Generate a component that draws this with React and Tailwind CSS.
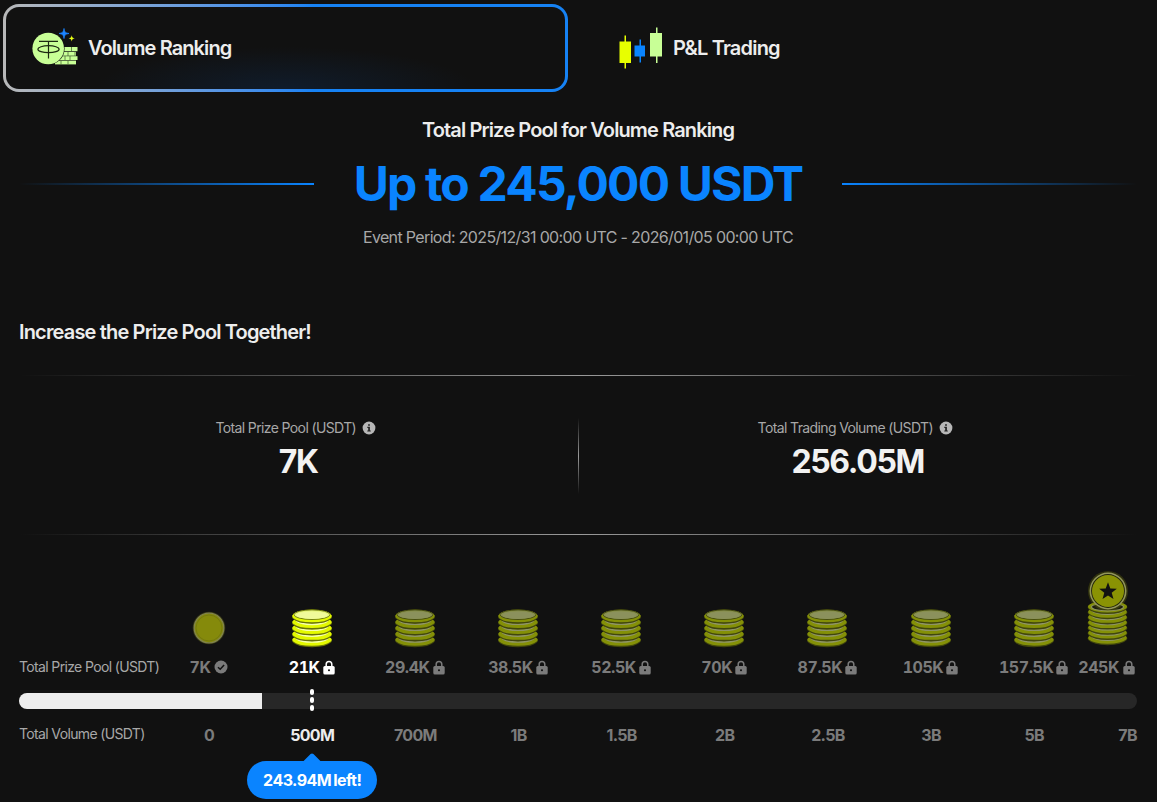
import React from "react";

const tiers = [
  { prize: "7K", volume: "0", state: "done" },
  { prize: "21K", volume: "500M", state: "next" },
  { prize: "29.4K", volume: "700M", state: "locked" },
  { prize: "38.5K", volume: "1B", state: "locked" },
  { prize: "52.5K", volume: "1.5B", state: "locked" },
  { prize: "70K", volume: "2B", state: "locked" },
  { prize: "87.5K", volume: "2.5B", state: "locked" },
  { prize: "105K", volume: "3B", state: "locked" },
  { prize: "157.5K", volume: "5B", state: "locked" },
];

function TetherIcon() {
  return (
    <svg width="48" height="40" viewBox="0 0 48 40" className="shrink-0">
      <g fill="#c8ff96">
        <rect x="28" y="19" width="17.500" height="4.200" />
        <rect x="28" y="23.900" width="16" height="3.800" />
        <rect x="27" y="28.200" width="18.500" height="3.800" />
        <rect x="23" y="32.600" width="21" height="3.800" />
      </g>
      <path d="M39.5 19v4M36 24v4M43 24v4M38 28v4M33 28v4M36 32.5v4M29 32.5v4" stroke="#4b6a36" strokeWidth="0.8" />
      <circle cx="16.2" cy="20.500" r="16.400" fill="#111" />
      <circle cx="16.2" cy="20.500" r="15.800" fill="#c8ff96" />
      <g fill="none" stroke="#1c2a12" strokeWidth="1.200">
        <path d="M7 13.300h19M16.500 13.300v17.200" />
        <ellipse cx="16.500" cy="21.200" rx="10.600" ry="3.500" />
      </g>
      <path d="M32 .5c.6 3.7 1.3 4.4 5 5-3.700.6-4.400 1.300-5 5-.6-3.700-1.300-4.400-5-5 3.700-.6 4.400-1.300 5-5z" fill="#1c84ff" stroke="#1c84ff" strokeWidth="0.800" />
      <path d="M39.700 7.300c.4 2.200.9 2.700 3.100 3.100-2.200.4-2.700.9-3.100 3.100-.4-2.200-.9-2.700-3.100-3.100 2.200-.4 2.700-.9 3.100-3.100z" fill="#e8ff14" />
    </svg>
  );
}

function CandlesIcon() {
  return (
    <svg width="44" height="44" viewBox="0 0 44 44" className="mt-px shrink-0">
      <path d="M5.500 8.500h1.500v33H5.500zM.5 14.500h11.500V36H.5z" fill="#e8ff00" />
      <path d="M20.500 12.500H22v23h-1.500zM15.500 18.500h10.500v11H15.500z" fill="#0a84ff" />
      <path d="M37 .5h1.500V36H37zM31 6h12V29.500H31z" fill="#c8ff96" />
    </svg>
  );
}

function InfoIcon() {
  return (
    <svg width="14" height="14" viewBox="0 0 14 14" className="shrink-0">
      <circle cx="7" cy="7" r="6.400" fill="#b7b7b7" />
      <path d="M6.100 3.200h1.800v1.600H6.100zM5.300 5.700h2.600v3.700h.9v1.200H5.300V9.400h.9V6.900h-.9z" fill="#222" />
    </svg>
  );
}

function LockIcon() {
  return (
    <svg width="12" height="15" viewBox="0 0 12 15" className="shrink-0">
      <path d="M3.200 6.500V4.200a2.800 2.800 0 0 1 5.600 0v2.300" fill="none" stroke="currentColor" strokeWidth="1.500" />
      <rect x="0.300" y="6" width="11.400" height="8.500" rx="1.500" fill="currentColor" />
      <circle cx="6" cy="10.200" r="1.050" fill="#111" />
    </svg>
  );
}

function CheckIcon() {
  return (
    <svg width="14" height="14" viewBox="0 0 14 14" className="shrink-0">
      <circle cx="7" cy="7" r="6.500" fill="currentColor" />
      <path d="M4 7.200l2.200 2.100 3.900-4.300" fill="none" stroke="#111" strokeWidth="1.500" />
    </svg>
  );
}

function SingleCoin() {
  return (
    <svg width="40" height="40" viewBox="0 0 40 40">
      <circle cx="20" cy="20" r="16.300" fill="#777b1c" opacity="0.350" />
      <circle cx="20" cy="20" r="14.800" fill="#858a0b" stroke="#80834c" strokeWidth="1.300" />
      <circle cx="20" cy="20" r="13" fill="none" stroke="#6d7110" strokeWidth="0.700" />
    </svg>
  );
}

function Rim({ y, height }) {
  return (
    <g fill="none" strokeLinecap="round">
      <path d={`M3 ${y}C8 ${y + 5.300} 32 ${y + 5.300} 37 ${y}`} stroke="#69720a" strokeWidth={height} />
      <path d={`M2.800 ${y - 0.500}C8 ${y + 4.300} 32 ${y + 4.300} 37.200 ${y - 0.500}`} stroke="#e3f900" strokeWidth={height - 1.300} />
      <path d={`M5 ${y - 1.300}C10 ${y + 2.600} 30 ${y + 2.600} 35 ${y - 1.300}`} stroke="#f6ffad" strokeWidth="1.600" />
    </g>
  );
}

function CoinStack() {
  const rims = [32.300, 26.500, 20.600, 14.700, 8.800];
  return (
    <svg width="40" height="40" viewBox="0 0 40 40">
      {rims.map((y) => (
        <Rim key={y} y={y} height={5.800} />
      ))}
      <ellipse cx="20" cy="7.300" rx="19.300" ry="5.900" fill="#e3f900" />
      <ellipse cx="20" cy="6.700" rx="18" ry="4.800" fill="#e8f77b" stroke="#59620a" strokeWidth="0.800" />
      <ellipse cx="20" cy="7.200" rx="15.600" ry="3.700" fill="#f0fa9a" />
    </svg>
  );
}

function StarStack() {
  const rims = [70.500, 65.300, 60.100, 54.900, 49.700, 44.500, 39.300];
  return (
    <svg width="44" height="80" viewBox="0 0 44 80" className="shrink-0">
      <g opacity="0.550" transform="translate(1.500 0)">
        {rims.map((y) => (
          <Rim key={y} y={y} height={5.400} />
        ))}
        <ellipse cx="20" cy="38.500" rx="19.300" ry="5.300" fill="#e3f900" />
        <ellipse cx="20" cy="39" rx="16" ry="3.900" fill="#25280e" stroke="#f0fa9a" strokeWidth="1.200" />
      </g>
      <circle cx="22" cy="23" r="20" fill="#767e05" opacity="0.300" />
      <circle cx="22" cy="23" r="18.500" fill="#92965b" />
      <circle cx="22" cy="23" r="16.900" fill="#22240a" />
      <circle cx="22" cy="23" r="16" fill="#8a9304" />
      <path d="M22 14.300l2.300 6.200 6.500.2-5.100 4.100 1.800 6.300-5.500-3.700-5.500 3.700 1.800-6.300-5.100-4.100 6.500-.2z" fill="#111" />
    </svg>
  );
}

function Stat({ label, value }) {
  return (
    <div className="flex flex-1 flex-col items-center">
      <div className="mr-[5px] flex h-5 items-center gap-[6px] text-sm tracking-[-0.620px] text-[#a8a8a8]">
        <span>{label}</span>
        <InfoIcon />
      </div>
      <div className="mt-[4px] text-[32px] leading-10 font-bold tracking-[-1.350px] text-[#f2f2f2]">{value}</div>
    </div>
  );
}

function Divider() {
  return <div className="h-px bg-linear-to-r from-transparent via-[#9a9a9a] to-transparent" />;
}

export default function App() {
  return (
    <main className="h-[802px] w-[1157px] overflow-hidden bg-[#111111] font-['Inter',sans-serif] text-[#ededed]">
      <nav className="flex h-24 pt-1 pl-[3px]">
        <div className="h-[88px] w-[565px] rounded-2xl bg-linear-to-r from-[#b8b8b8] to-[#1682f4] to-55% p-[3px]">
          <div className="flex h-full items-center rounded-[13px] bg-[#111111] bg-[radial-gradient(ellipse_190px_42px_at_50%_100%,#101c2b_0%,transparent_100%)] pl-[26px]">
            <TetherIcon />
            <span className="ml-2 text-xl font-semibold tracking-[-0.900px] whitespace-nowrap">Volume Ranking</span>
          </div>
        </div>
        <div className="ml-[51px] flex h-[88px] items-center">
          <CandlesIcon />
          <span className="ml-[10px] text-xl font-semibold tracking-[-0.800px] whitespace-nowrap">P&amp;L Trading</span>
        </div>
      </nav>

      <header className="flex w-[1156px] flex-col items-center">
        <h2 className="mt-5 text-xl leading-7 font-semibold tracking-[-0.870px]">Total Prize Pool for Volume Ranking</h2>
        <div className="mt-[10px] flex h-[60px] w-[1118px] items-center justify-between">
          <div className="h-0.5 w-[295px] bg-linear-to-r from-transparent to-[#0a84ff]" />
          <div className="text-5xl font-bold tracking-[-1.800px] whitespace-nowrap text-[#0a84ff]">Up to 245,000 USDT</div>
          <div className="h-0.5 w-[295px] bg-linear-to-r from-[#0a84ff] to-transparent" />
        </div>
        <p className="mt-[11px] text-base leading-6 tracking-[-0.650px] text-[#a8a8a8]">
          Event Period: 2025/12/31 00:00 UTC - 2026/01/05 00:00 UTC
        </p>
      </header>

      <section className="mt-[69px] ml-[19px] w-[1118px]">
        <h3 className="text-xl leading-7 font-semibold tracking-[-0.840px]">Increase the Prize Pool Together!</h3>
        <div className="mt-[29px]">
          <Divider />
        </div>
        <div className="flex h-[158px] items-start pt-[42px]">
          <Stat label="Total Prize Pool (USDT)" value="7K" />
          <div className="h-[76px] w-px bg-linear-to-b from-transparent via-[#9a9a9a] to-transparent" />
          <Stat label="Total Trading Volume (USDT)" value="256.05M" />
        </div>
        <Divider />

        <div className="flex h-[113px] items-end pl-[138px]">
          {tiers.map((t) => (
            <div
              key={t.prize}
              className={`flex w-[103.150px] shrink-0 justify-center ${t.state === "locked" ? "opacity-55" : ""}`}
            >
              {t.state === "done" ? <SingleCoin /> : <CoinStack />}
            </div>
          ))}
          <div className="flex min-w-0 flex-1 justify-end pr-[7px]">
            <StarStack />
          </div>
        </div>

        <div className="mt-[7px] flex h-6 items-center">
          <div className="w-[138px] shrink-0 text-sm tracking-[-0.640px] whitespace-nowrap text-[#a8a8a8]">Total Prize Pool (USDT)</div>
          {tiers.map((t) => (
            <div
              key={t.prize}
              className={`flex w-[103.150px] shrink-0 items-center justify-center gap-[3px] text-base font-bold tracking-[-0.450px] tabular-nums ${t.state === "next" ? "text-white" : "text-[#7b7b7b]"}`}
            >
              <span>{t.prize}</span>
              {t.state === "done" ? <CheckIcon /> : <LockIcon />}
            </div>
          ))}
          <div className="flex min-w-0 flex-1 items-center justify-end gap-[4px] pr-0.5 text-base font-bold tracking-[-0.450px] text-[#7b7b7b] tabular-nums">
            <span>245K</span>
            <LockIcon />
          </div>
        </div>

        <div className="relative mt-[14px] h-4 overflow-visible rounded-full bg-[#272727]">
          <div className="h-4 w-[243px] rounded-l-full bg-[#ededed]" />
          <div className="absolute -top-1 left-[291px] flex flex-col gap-[2px]">
            <i className="h-[6px] w-1 rounded-full bg-white" />
            <i className="h-[6px] w-1 rounded-full bg-white" />
            <i className="h-[6px] w-1 rounded-full bg-white" />
          </div>
        </div>

        <div className="mt-[14px] flex h-6 items-center">
          <div className="w-[138px] shrink-0 pb-0.5 text-sm tracking-[-0.640px] whitespace-nowrap text-[#a8a8a8]">Total Volume (USDT)</div>
          {tiers.map((t) => (
            <div
              key={t.volume}
              className={`relative w-[103.150px] shrink-0 pl-px text-center text-base font-bold tracking-[-0.650px] ${t.state === "next" ? "text-[#ededed]" : "text-[#7b7b7b]"}`}
            >
              {t.volume}
              {t.state === "next" && (
                <div className="absolute top-[38px] left-1/2 -translate-x-1/2">
                  <div className="absolute -top-[5px] left-1/2 size-4 -translate-x-1/2 rotate-45 rounded-[2px] bg-[#0a84ff]" />
                  <div className="relative flex h-[38px] w-[130px] items-center justify-center rounded-full bg-[#0a84ff] pb-px pl-px text-base tracking-[-0.550px] whitespace-nowrap text-white">
                    <span>243.94M</span>
                    <span className="ml-0.5">left!</span>
                  </div>
                </div>
              )}
            </div>
          ))}
          <div className="min-w-0 flex-1 text-right text-base font-bold tracking-[-0.600px] text-[#7b7b7b]">7B</div>
        </div>
      </section>
    </main>
  );
}
